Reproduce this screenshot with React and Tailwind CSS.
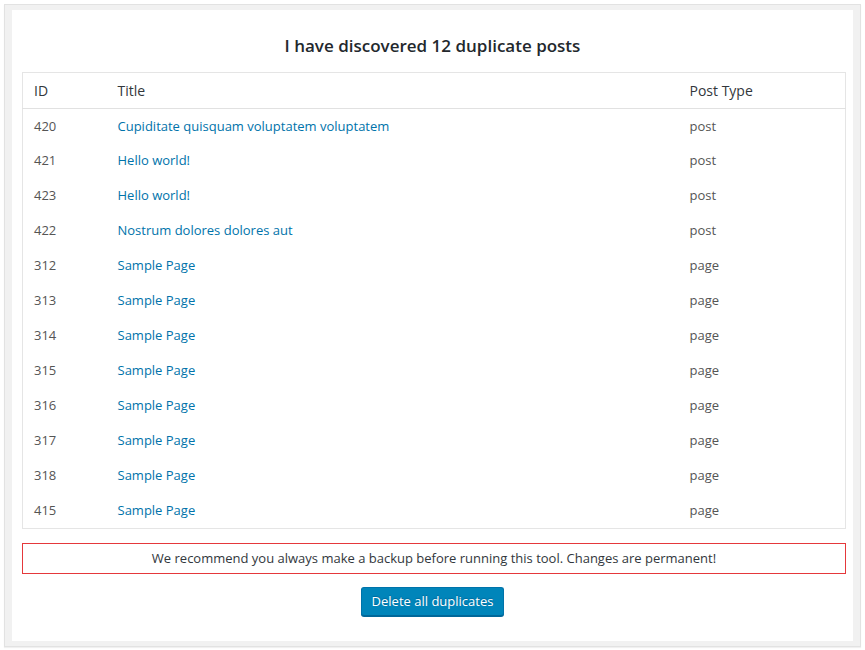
import React from 'react';

const rows = [
  { id: 420, title: 'Cupiditate quisquam voluptatem voluptatem', type: 'post' },
  { id: 421, title: 'Hello world!', type: 'post' },
  { id: 423, title: 'Hello world!', type: 'post' },
  { id: 422, title: 'Nostrum dolores dolores aut', type: 'post' },
  { id: 312, title: 'Sample Page', type: 'page' },
  { id: 313, title: 'Sample Page', type: 'page' },
  { id: 314, title: 'Sample Page', type: 'page' },
  { id: 315, title: 'Sample Page', type: 'page' },
  { id: 316, title: 'Sample Page', type: 'page' },
  { id: 317, title: 'Sample Page', type: 'page' },
  { id: 318, title: 'Sample Page', type: 'page' },
  { id: 415, title: 'Sample Page', type: 'page' },
];

export default function App() {
  return (
    <div className="w-[865px] h-[650px] bg-white p-[4px] font-['Open_Sans',sans-serif] text-[#32373c]">
      <div className="h-[643px] border border-[#e2e2e2] bg-[#f1f1f1] px-[7px] py-[5px] shadow-[0_1px_1px_rgba(0,0,0,0.06)]">
        <div className="h-full bg-white px-[10px] pt-[25px]">
          <h1 className="text-center text-[17px] font-semibold text-[#23282d] leading-[22px]">
            I have discovered 12 duplicate posts
          </h1>

          <table className="mt-[15px] w-[824px] border border-[#e5e5e5] text-[13px] border-collapse">
            <thead>
              <tr className="h-[36px] border-b border-[#e1e1e1] text-left text-[14px]">
                <th className="w-[95px] pl-[11px] font-normal">ID</th>
                <th className="font-normal">Title</th>
                <th className="w-[156px] font-normal">Post Type</th>
              </tr>
            </thead>
            <tbody>
              {rows.map((r) => (
                <tr key={r.id} className="h-[35px]">
                  <td className="pl-[11px] text-[#555]">{r.id}</td>
                  <td>
                    <a href="#" className="text-[#0073aa]">{r.title}</a>
                  </td>
                  <td className="text-[#555]">{r.type}</td>
                </tr>
              ))}
            </tbody>
          </table>

          <div className="mt-[14px] w-[824px] h-[31px] border border-[#e5383b] flex items-center justify-center text-[13px] text-[#32373c]">
            We recommend you always make a backup before running this tool. Changes are permanent!
          </div>

          <div className="mt-[13px] flex justify-center">
            <button className="h-[29px] px-[10px] rounded-[3px] bg-[#0085ba] border border-[#0073aa] border-b-[#006799] shadow-[0_1px_0_#006799] text-white text-[13px] [text-shadow:0_-1px_1px_#006799]">
              Delete all duplicates
            </button>
          </div>
        </div>
      </div>
    </div>
  );
}
